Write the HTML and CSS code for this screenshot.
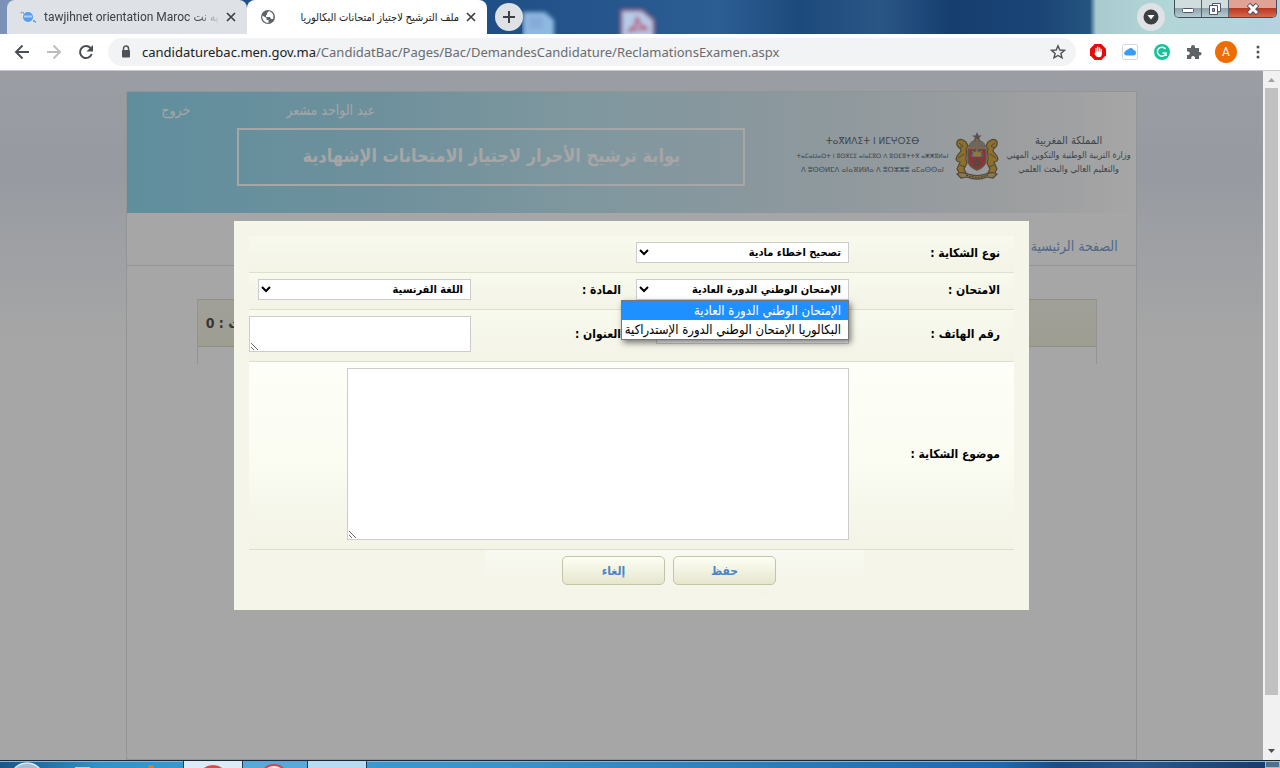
FILE: index.html
```html
<!DOCTYPE html>
<html lang="ar">
<head>
<meta charset="utf-8">
<title>ملف الترشيح لاجتياز امتحانات البكالوريا</title>
<link rel="stylesheet" href="styles.css">
</head>
<body>
<header class="browser">
  <div class="tabstrip">
    <svg class="desktop-icons" width="140" height="34" viewBox="0 0 140 34" aria-hidden="true">
      <g class="soft">
        <path d="M1 12h22l9 8v20H1z" fill="#8fb9e0"/>
        <path d="M7 20h14M7 26h14" stroke="#7f9fd8" stroke-width="3"/>
        <path d="M99 10h21l12 10v20H99z" fill="#b5cbe8" stroke="#a05a78" stroke-width="2"/>
        <path d="M106 31c7-3 9-9 9-14 1 6 4 10 11 12-7-1-13 0-20 2z" fill="none" stroke="#b4506a" stroke-width="2"/>
      </g>
    </svg>
    <div class="tab">
      <svg class="favicon" width="16" height="16" viewBox="0 0 16 16" aria-hidden="true"><circle cx="8" cy="8" r="5" fill="#5b9cf0"/><path d="M4 7.500h8" stroke="#a9d0ff" stroke-width="2"/><path d="M1 3l1 1M3 4h1M13 12h2M15 13h1" stroke="#6aa8f5" stroke-width="2"/></svg>
      <span class="tab-title">tawjihnet orientation Maroc يه نت</span>
      <button class="tab-close" aria-label="Close tab"><svg width="10" height="10" viewBox="0 0 10 10"><path d="M1 1l8 8M9 1L1 9" stroke="#3c4043" stroke-width="1.700"/></svg></button>
    </div>
    <div class="tab tab-active">
      <svg class="favicon" width="16" height="16" viewBox="0 0 16 16" aria-hidden="true"><circle cx="8" cy="8" r="7" fill="#5f6368"/><path d="M2.300 6.500L6.500 9v2h2v3a6.300 6.300 0 0 1-6.200-7.500zM9 2L7 4v1.500l-1 1v1.500h4l1 2h2.200A6.200 6.200 0 0 0 9 2z" fill="#fff"/></svg>
      <span class="tab-title tab-title-rtl" dir="rtl">ملف الترشيح لاجتياز امتحانات البكالوريا</span>
      <button class="tab-close" aria-label="Close tab"><svg width="10" height="10" viewBox="0 0 10 10"><path d="M1 1l8 8M9 1L1 9" stroke="#3c4043" stroke-width="1.700"/></svg></button>
    </div>
    <button class="round-btn" aria-label="New tab"><svg width="14" height="14" viewBox="0 0 14 14"><path d="M7 1v12M1 7h12" stroke="#3c4043" stroke-width="2"/></svg></button>
    <div class="window-side">
      <button class="round-btn" aria-label="Search tabs"><svg width="16" height="16" viewBox="0 0 16 16"><circle cx="8" cy="8" r="7.500" fill="#3c4043"/><path d="M4.500 6h7L8 10.500z" fill="#fff"/></svg></button>
      <div class="window-btns">
        <button class="win-btn" aria-label="Minimize"><svg width="14" height="14" viewBox="0 0 14 14"><rect x="1.500" y="6.500" width="11" height="4" rx="1" fill="#fff" stroke="#50546a"/></svg></button>
        <button class="win-btn" aria-label="Restore"><svg width="14" height="14" viewBox="0 0 14 14"><path d="M4.500 1.500h8v8h-8z" fill="#fff" stroke="#50546a"/><path d="M1.500 3.500h8v9h-8z" fill="#fff" stroke="#50546a"/><path d="M4.500 6.500h2v3h-2z" fill="#aab" stroke="#50546a"/></svg></button>
        <button class="win-btn win-close" aria-label="Close"><svg width="14" height="12" viewBox="0 0 14 12"><path d="M2.500 1.500L11.500 10.500M11.500 1.500L2.500 10.500" stroke="#50546a" stroke-width="5"/><path d="M3 2l8 8M11 2l-8 8" stroke="#fff" stroke-width="3"/></svg></button>
      </div>
    </div>
  </div>
  <div class="toolbar">
    <button class="tool" aria-label="Back"><svg width="16" height="16" viewBox="0 0 16 16"><path d="M15 8H2M8.500 1.500L2 8l6.500 6.500" fill="none" stroke="#4a4d51" stroke-width="1.900"/></svg></button>
    <button class="tool" aria-label="Forward"><svg width="16" height="16" viewBox="0 0 16 16"><path d="M1 8h13M7.500 1.500L14 8l-6.500 6.500" fill="none" stroke="#babcbe" stroke-width="1.900"/></svg></button>
    <button class="tool" aria-label="Reload"><svg width="16" height="16" viewBox="0 0 16 16"><path d="M13.700 10A6 6 0 1 1 12.500 4" fill="none" stroke="#4a4d51" stroke-width="2"/><path d="M15 1v6.500H8.500z" fill="#4a4d51"/></svg></button>
    <div class="omnibox">
      <svg width="10" height="14" viewBox="0 0 10 14" aria-hidden="true"><path d="M2.500 6V3.500a2.500 2.500 0 0 1 5 0V6" fill="none" stroke="#4f5256" stroke-width="1.500"/><rect x="1" y="5" width="8" height="7.500" rx="1" fill="#4f5256"/></svg>
      <span class="url"><span class="url-host">candidaturebac.men.gov.ma</span>/CandidatBac/Pages/Bac/DemandesCandidature/ReclamationsExamen.aspx</span>
      <button class="tool star" aria-label="Bookmark"><svg width="16" height="16" viewBox="0 0 16 16"><path d="M8 1.800l1.800 4.200 4.600.4-3.500 3 1.100 4.500L8 11.500l-4 2.400 1.100-4.500-3.500-3 4.600-.4z" fill="none" stroke="#4f5256" stroke-width="1.400"/></svg></button>
    </div>
    <button class="tool" aria-label="Ad blocker"><svg width="16" height="16" viewBox="0 0 16 16"><path d="M4.700 0h6.600L16 4.700v6.600L11.300 16H4.700L0 11.300V4.700z" fill="#e30b0b"/><path d="M6 8V4.500M7.800 8V3.200M9.600 8V3.800M11.300 9V5.500" stroke="#fff" stroke-width="1.300" stroke-linecap="round"/><path d="M5.400 7.500h6.500V10c0 2-1.200 3.300-3 3.300-2 0-3-1-4.600-3.800l.8-.6.3.2z" fill="#fff"/></svg></button>
    <button class="tool" aria-label="iCloud"><svg width="16" height="16" viewBox="0 0 16 16"><rect x=".5" y=".5" width="15" height="15" rx="2" fill="#fff" stroke="#d5d7da"/><path d="M4 11.500a2.300 2.300 0 0 1-.2-4.500A2 2 0 0 1 6 5.500 3 3 0 0 1 11.500 6 2.800 2.800 0 0 1 12 11.500z" fill="#3b9cf5"/></svg></button>
    <button class="tool" aria-label="Grammar"><svg width="16" height="16" viewBox="0 0 16 16"><circle cx="8" cy="8" r="8" fill="#15c39a"/><path d="M11.500 5A4.500 4.500 0 1 0 12 9.500M8.500 9H12v3" fill="none" stroke="#fff" stroke-width="1.500"/></svg></button>
    <button class="tool" aria-label="Extensions"><svg width="16" height="16" viewBox="0 0 16 16"><path d="M1 4h4V3a2 2 0 0 1 4 0v1h4v4h.8a1.800 1.800 0 0 1 0 3.600H13V15H9v-1a1.900 1.900 0 0 0-3.800 0v1H1v-4h1a1.800 1.800 0 0 0 0-3.600H1z" fill="#5f6368"/></svg></button>
    <button class="tool" aria-label="Profile"><span class="avatar">A</span></button>
    <button class="tool" aria-label="Menu"><svg width="4" height="14" viewBox="0 0 4 14"><circle cx="2" cy="2" r="1.500" fill="#4f5256"/><circle cx="2" cy="7" r="1.500" fill="#4f5256"/><circle cx="2" cy="12" r="1.500" fill="#4f5256"/></svg></button>
  </div>
</header>

<div class="viewport">
  <main class="page" dir="rtl">
    <div class="sheet">
      <div class="banner">
        <div class="ministry">
          <p class="ministry-ar"><span class="ar-top">المملكة المغربية</span><br>وزارة التربية الوطنية والتكوين المهني<br>والتعليم العالي والبحث العلمي</p>
          <svg class="arms" width="46" height="48" viewBox="0 0 46 48" aria-hidden="true">
            <path d="M23 0l1.500 3.500H28l-2.800 2 1 3.500L23 7l-3.200 2 1-3.500-2.800-2h3.500z" fill="#8c7c78"/>
            <path d="M15 15c0-4 3-6 8-7 5 1 8 3 8 7z" fill="#a59c98" stroke="#8c7d7d"/>
            <path d="M14 15h18M16 12l2-2M23 15V8M30 12l-2-2" stroke="#c09f68" stroke-width="1.500"/>
            <path d="M14 17h18v11c0 5-4 8-9 10-5-2-9-5-9-10z" fill="#d4525c" stroke="#9a8060" stroke-width="1.500"/>
            <path d="M17 22a6.500 6.500 0 0 1 12 0v3H17z" fill="#6f94b8"/>
            <path d="M19 24a4 4 0 0 1 8 0zM23 17v3M18 19l2 2M28 19l-2 2" fill="#e2b956" stroke="#e2b956"/>
            <path d="M23 27l1 2.500h3l-2.400 1.700.9 2.800-2.500-1.700-2.500 1.700.9-2.800-2.400-1.700h3z" fill="none" stroke="#50865c"/>
            <path d="M9 8c-4-2-7 1-6 5 1 3 4 3 4 6l-4 5c-2 4 0 6 3 6l-3 7 3 5 6-1-2-4 3-6c-3-6 1-10-1-14l2-3-2-4z" fill="#d9ac43" stroke="#7f6f58" stroke-width="1.200"/>
            <path d="M37 8c4-2 7 1 6 5-1 3-4 3-4 6l4 5c2 4 0 6-3 6l3 7-3 5-6-1 2-4-3-6c3-6-1-10 1-14l-2-3 2-4z" fill="#d9ac43" stroke="#7f6f58" stroke-width="1.200"/>
            <path d="M5 11l4 3-3 2M4 26l6-4M6 33l5 2M41 11l-4 3 3 2M42 26l-6-4M40 33l-5 2" fill="none" stroke="#7f6f58"/>
            <path d="M3 42c4-3 8-1 11 0 6 2 12 2 18 0 3-1 7-3 11 0l-4 4-6-1c-7 3-13 3-20 0l-6 1z" fill="#d8b878" stroke="#7f6f58" stroke-width="1.200"/>
            <path d="M12 43c8 3 14 3 22 0" fill="none" stroke="#665948" stroke-dasharray="2 1"/>
          </svg>
          <p class="ministry-tz" dir="ltr" lang="zgh"><span class="tz-top">ⵜⴰⴳⵍⴷⵉⵜ ⵏ ⵍⵎⵖⵔⵉⴱ</span><br><span class="tz-mid">ⵜⴰⵎⴰⵡⴰⵙⵜ ⵏ ⵓⵙⴳⵎⵉ ⴰⵏⴰⵎⵓⵔ ⴷ ⵓⵙⵎⵓⵜⵜⴳ ⴰⵥⵥⵓⵍⴰⵏ</span><br>ⴷ ⵓⵙⵙⵍⵎⴷ ⴰⵏⴰⴼⵍⵍⴰ ⴷ ⵓⵔⵣⵣⵓ ⴰⵎⴰⵙⵙⴰⵏ</p>
        </div>
        <div class="portal">
          <div class="account"><span>عبد الواحد مشعر</span><a href="#">خروج</a></div>
          <h1 class="portal-title">بوابة ترشيح الأحرار لاجتياز الامتحانات الإشهادية</h1>
        </div>
      </div>
      <nav class="nav"><a href="#">الصفحة الرئيسية</a></nav>
      <section class="results"><h2 class="results-head">عدد الشكايات : 0</h2></section>
    </div>

    <div class="overlay">
      <form class="dialog">
        <div class="row">
          <label for="type">نوع الشكاية :</label>
          <select id="type"><option>تصحيح اخطاء مادية</option></select>
        </div>
        <div class="row">
          <label for="exam">الامتحان :</label>
          <div class="combo">
            <select id="exam"><option>الإمتحان الوطني الدورة العادية</option></select>
            <ul class="options" role="listbox" aria-label="الامتحان">
              <li class="option option-on" role="option" aria-selected="true">الإمتحان الوطني الدورة العادية</li>
              <li class="option" role="option" aria-selected="false">البكالوريا الإمتحان الوطني الدورة الإستدراكية</li>
            </ul>
          </div>
          <label class="second" for="subject">المادة :</label>
          <select id="subject"><option>اللغة الفرنسية</option></select>
        </div>
        <div class="row">
          <label for="phone">رقم الهاتف :</label>
          <input id="phone" type="tel">
          <label class="second" for="address">العنوان :</label>
          <textarea id="address" class="address"></textarea>
        </div>
        <div class="row row-light">
          <label for="body">موضوع الشكاية :</label>
          <textarea id="body" class="complaint"></textarea>
        </div>
        <div class="actions">
          <button type="button" class="btn">حفظ</button>
          <button type="button" class="btn">إلغاء</button>
        </div>
      </form>
    </div>
  </main>
  <div class="scrollbar" aria-hidden="true">
    <svg width="17" height="17" viewBox="0 0 17 17"><path d="M5 11h7L8.500 7z" fill="#a3a3a3"/></svg>
    <div class="thumb"></div>
    <div class="track-rest"></div>
    <svg width="17" height="17" viewBox="0 0 17 17"><path d="M5 6h7l-3.500 4z" fill="#505050"/></svg>
  </div>
</div>

<footer class="taskbar">
  <svg width="368" height="7" viewBox="0 0 368 7" aria-hidden="true">
    <ellipse cx="27" cy="15" rx="15" ry="13" fill="#a8bdd0" stroke="#e0eaf3" stroke-width="1.500"/>
    <path d="M75 6h15v2H75z" fill="#d9cf94"/>
    <path d="M149 4h4l1 3h-6z" fill="#e87a10"/>
    <path d="M184 0h58v7h-58z" fill="#dcebf5"/>
    <path d="M183.500 0v7M242.500 0v7M307.500 0v7M366.500 0v7" stroke="#1c3d5e"/>
    <path d="M243 0h64v7h-64z" fill="#58a8d8"/>
    <path d="M308 0h58v7h-58z" fill="#b9dbef"/>
    <ellipse cx="213" cy="14" rx="13" ry="10" fill="#d94c44"/>
    <ellipse cx="274" cy="14" rx="12" ry="10" fill="#f4eef0" stroke="#d8434b" stroke-width="2"/>
  </svg>
  <button class="show-desktop" aria-label="Show desktop"></button>
</footer>
</body>
</html>
```
FILE: styles.css
```css
* { box-sizing: border-box; }
body {
  margin: 0;
  height: 100vh;
  display: flex;
  flex-direction: column;
  overflow: hidden;
  font-family: "DejaVu Sans Condensed", "DejaVu Sans", sans-serif;
  font-size: 12px;
}
button { border: 0; padding: 0; background: none; font: inherit; }
p, h1, h2, ul { margin: 0; padding: 0; }
a { text-decoration: none; }

/* Browser frame */
.tabstrip {
  position: relative;
  display: flex;
  height: 34px;
  padding-left: 7px;
  background: linear-gradient(90deg, #7b91b5 0, #7b91b5 8px, #1b4f89 240px, #1f4f86 500px, #2c5d93 720px, #1d4a7c 800px, #2a5686 880px, #163f70 950px, #1a4475 1040px, #265580 1090px, #a9cbd0 1096px, #b3d6d8 1170px, #b5d2e0 100%);
}
.desktop-icons { position: absolute; left: 522px; top: 0; }
.soft { filter: blur(2px); }
.tab {
  position: relative;
  display: flex;
  align-items: center;
  width: 240px;
  padding: 0 11px 0 13px;
  background: #dee1e6;
  border-radius: 8px 8px 0 0;
  color: #3c4043;
  font-family: Roboto, "DejaVu Sans Condensed", sans-serif;
  font-size: 12px;
}
.tab-active { background: #fff; }
.tab .favicon { flex: none; }
.tab-title {
  flex: 1;
  margin: 0 4px 0 8px;
  overflow: hidden;
  white-space: nowrap;
  mask-image: linear-gradient(90deg, #000 85%, transparent);
}
.tab-title-rtl { margin-right: 7px; font-size: 11px; mask-image: none; color: #222; }
.tab-close { flex: none; display: flex; width: 10px; }
.round-btn {
  position: relative;
  display: flex;
  align-items: center;
  justify-content: center;
  width: 28px;
  height: 28px;
  margin: 3px 0 0 8px;
  border-radius: 50%;
  background: #dee1e6;
}
.window-side { display: flex; align-items: flex-start; gap: 9px; margin-left: auto; padding-right: 3px; }
.window-btns { display: flex; border: 1px solid #3f4f58; border-top: 0; border-radius: 0 0 5px 5px; overflow: hidden; }
.win-btn {
  display: flex;
  align-items: center;
  justify-content: center;
  width: 27px;
  height: 17px;
  border-right: 1px solid #56636c;
  background: linear-gradient(#d0dcde 45%, #8fa3aa 50%, #b4cdd2);
}
.win-close { width: 47px; border: 0; background: linear-gradient(#e0a294 45%, #bb3720 50%, #d6694d); }
.toolbar {
  display: flex;
  align-items: center;
  height: 37px;
  padding: 0 6px;
  background: #fff;
  border-bottom: 1px solid #c5c7ca;
}
.tool { flex: none; display: flex; align-items: center; justify-content: center; width: 32px; height: 32px; }
.omnibox {
  flex: 1;
  min-width: 0;
  display: flex;
  align-items: center;
  height: 28px;
  margin: 0 6px;
  padding: 0 2px 0 13px;
  border-radius: 14px;
  background: #f1f3f4;
}
.url {
  flex: 1;
  margin-left: 11px;
  overflow: hidden;
  white-space: nowrap;
  color: #696c70;
  font: 13px "Noto Sans", "Open Sans", sans-serif;
}
.url-host { color: #202124; }
.avatar { width: 22px; border-radius: 50%; background: #ef6c00; color: #fff; font: 12px/22px Roboto, sans-serif; }

/* Page */
.viewport { flex: 1; min-height: 0; display: flex; }
.page {
  position: relative;
  flex: 1;
  min-width: 0;
  overflow: hidden;
  padding-top: 20px;
  background: linear-gradient(#eef2fa, #e8eef8 100px, #fff 270px);
}
.sheet {
  width: 80%;
  min-height: 100%;
  margin: 0 auto;
  border: 1px solid #e4e4e4;
  background: #fff;
}
.banner {
  display: flex;
  justify-content: space-between;
  height: 121px;
  padding: 0 5px 0 34px;
  background: linear-gradient(90deg, #94dbf2, #a9def0 25%, #c4e8f4 45%, #dcebf2 70%, #f2f4f6 90%, #fff);
}
.ministry { display: flex; align-items: flex-start; gap: 4px; padding-top: 40px; color: #5f6c76; white-space: nowrap; }
.ministry-ar { padding-top: 2px; text-align: center; font-size: 9px; line-height: 14px; }
.ar-top { font-size: 11px; }
.ministry-tz { padding-top: 2px; text-align: center; font-size: 7px; line-height: 14px; font-family: "DejaVu Sans", sans-serif; }
.tz-top { font-size: 9px; }
.tz-mid { font-size: 6px; }
.arms { margin: 0 2px; }
.portal { flex: none; width: 584px; color: #fff; }
.account { display: flex; justify-content: flex-end; gap: 96px; padding-top: 8px; font-size: 14px; line-height: 20px; }
.account a { color: inherit; }
.portal-title {
  width: 508px;
  height: 58px;
  margin-top: 8px;
  border: 2px solid #fff;
  text-align: center;
  font-size: 18px;
  line-height: 52px;
  white-space: nowrap;
}
.nav { padding: 23px 18px 8px; border-bottom: 1px solid #e4e4e4; line-height: 21px; font-size: 14px; }
.nav a { color: #7b9fd2; }
.results { width: 900px; max-width: 100%; height: 65px; margin: 33px 39px 0 auto; border: 1px solid #e4e4da; border-width: 0 1px; }
.results-head {
  padding: 0 8px;
  border: 1px solid #dedecf;
  border-width: 1px 0;
  background: linear-gradient(#f6f6ec, #f2f2e0);
  color: #555;
  text-align: left;
  font-size: 14px;
  line-height: 46px;
}

/* Dialog */
.overlay {
  position: absolute;
  inset: 0;
  display: flex;
  justify-content: center;
  align-items: flex-start;
  padding-top: 150px;
  background: rgba(0, 0, 0, .35);
}
.dialog { width: 795px; max-width: 100%; padding: 15px; background: #f5f5e9; color: #000; font-weight: bold; }
.row {
  display: grid;
  grid-template-columns: 165fr 228fr 150fr 222fr;
  align-items: center;
  padding: 6px 0 9px;
  border-bottom: 1px solid #dfdfcf;
  background: linear-gradient(#f8faee, #f3f3e6);
}
.row-light { background: linear-gradient(#fdfff8, #fbfdf3 50%, #f3f3e6); }
.row label { padding-right: 14px; white-space: nowrap; }
.row .second { padding-right: 0; }
select, input, textarea { display: block; margin: 0; border: 1px solid #ccc; border-radius: 0; background: #fff; color: #000; font: inherit; }
select { width: 213px; height: 21px; padding: 0 3px; font-size: 11px; }
input { width: 193px; height: 20px; }
.combo { position: relative; }
.address { width: 100%; height: 36px; }
.complaint { grid-column: 2 / 5; width: 502px; height: 172px; }
.options {
  position: absolute;
  z-index: 1;
  top: 100%;
  right: 0;
  width: 228px;
  border: 1px solid #777;
  background: #fff;
  box-shadow: 2px 3px 6px rgba(0, 0, 0, .5);
  list-style: none;
  font-weight: normal;
  font-size: 13px;
}
.option { padding: 0 7px 0 0; line-height: 19px; white-space: nowrap; }
.option-on { background: #1e90ff; color: #fff; }
.actions {
  display: flex;
  justify-content: center;
  gap: 8px;
  width: 378px;
  height: 45px;
  margin-right: 150px;
  padding: 6px 12px 0 0;
  background: linear-gradient(#f8f9f0, #f4f4e8);
}
.btn {
  width: 103px;
  height: 29px;
  border: 1px solid #c3c5a5;
  border-radius: 5px;
  background: linear-gradient(#fdfff5, #e6e6cd);
  color: #4c84c6;
  font-size: 12px;
  font-weight: bold;
}

/* Scrollbar and taskbar */
.scrollbar { flex: none; display: flex; flex-direction: column; width: 17px; background: #f1f1f1; }
.scrollbar svg { flex: none; }
.thumb { flex: 607; margin: 0 2px; background: #c1c1c1; }
.track-rest { flex: 48; }
.taskbar {
  flex: none;
  display: flex;
  justify-content: space-between;
  height: 8px;
  overflow: hidden;
  border-top: 1px solid #16293b;
  box-shadow: inset 0 1px #86b6d8;
  background: linear-gradient(90deg, #1c5488, #3093c8 100px, #3a9ed4 250px, #3a93c9 500px, #1f68b0 1000px, #1c4c84 1060px, #2a578c 1140px, #173a68);
}
.show-desktop { width: 15px; border: 1px solid #a8bac8; background: #4d708f; }
```
